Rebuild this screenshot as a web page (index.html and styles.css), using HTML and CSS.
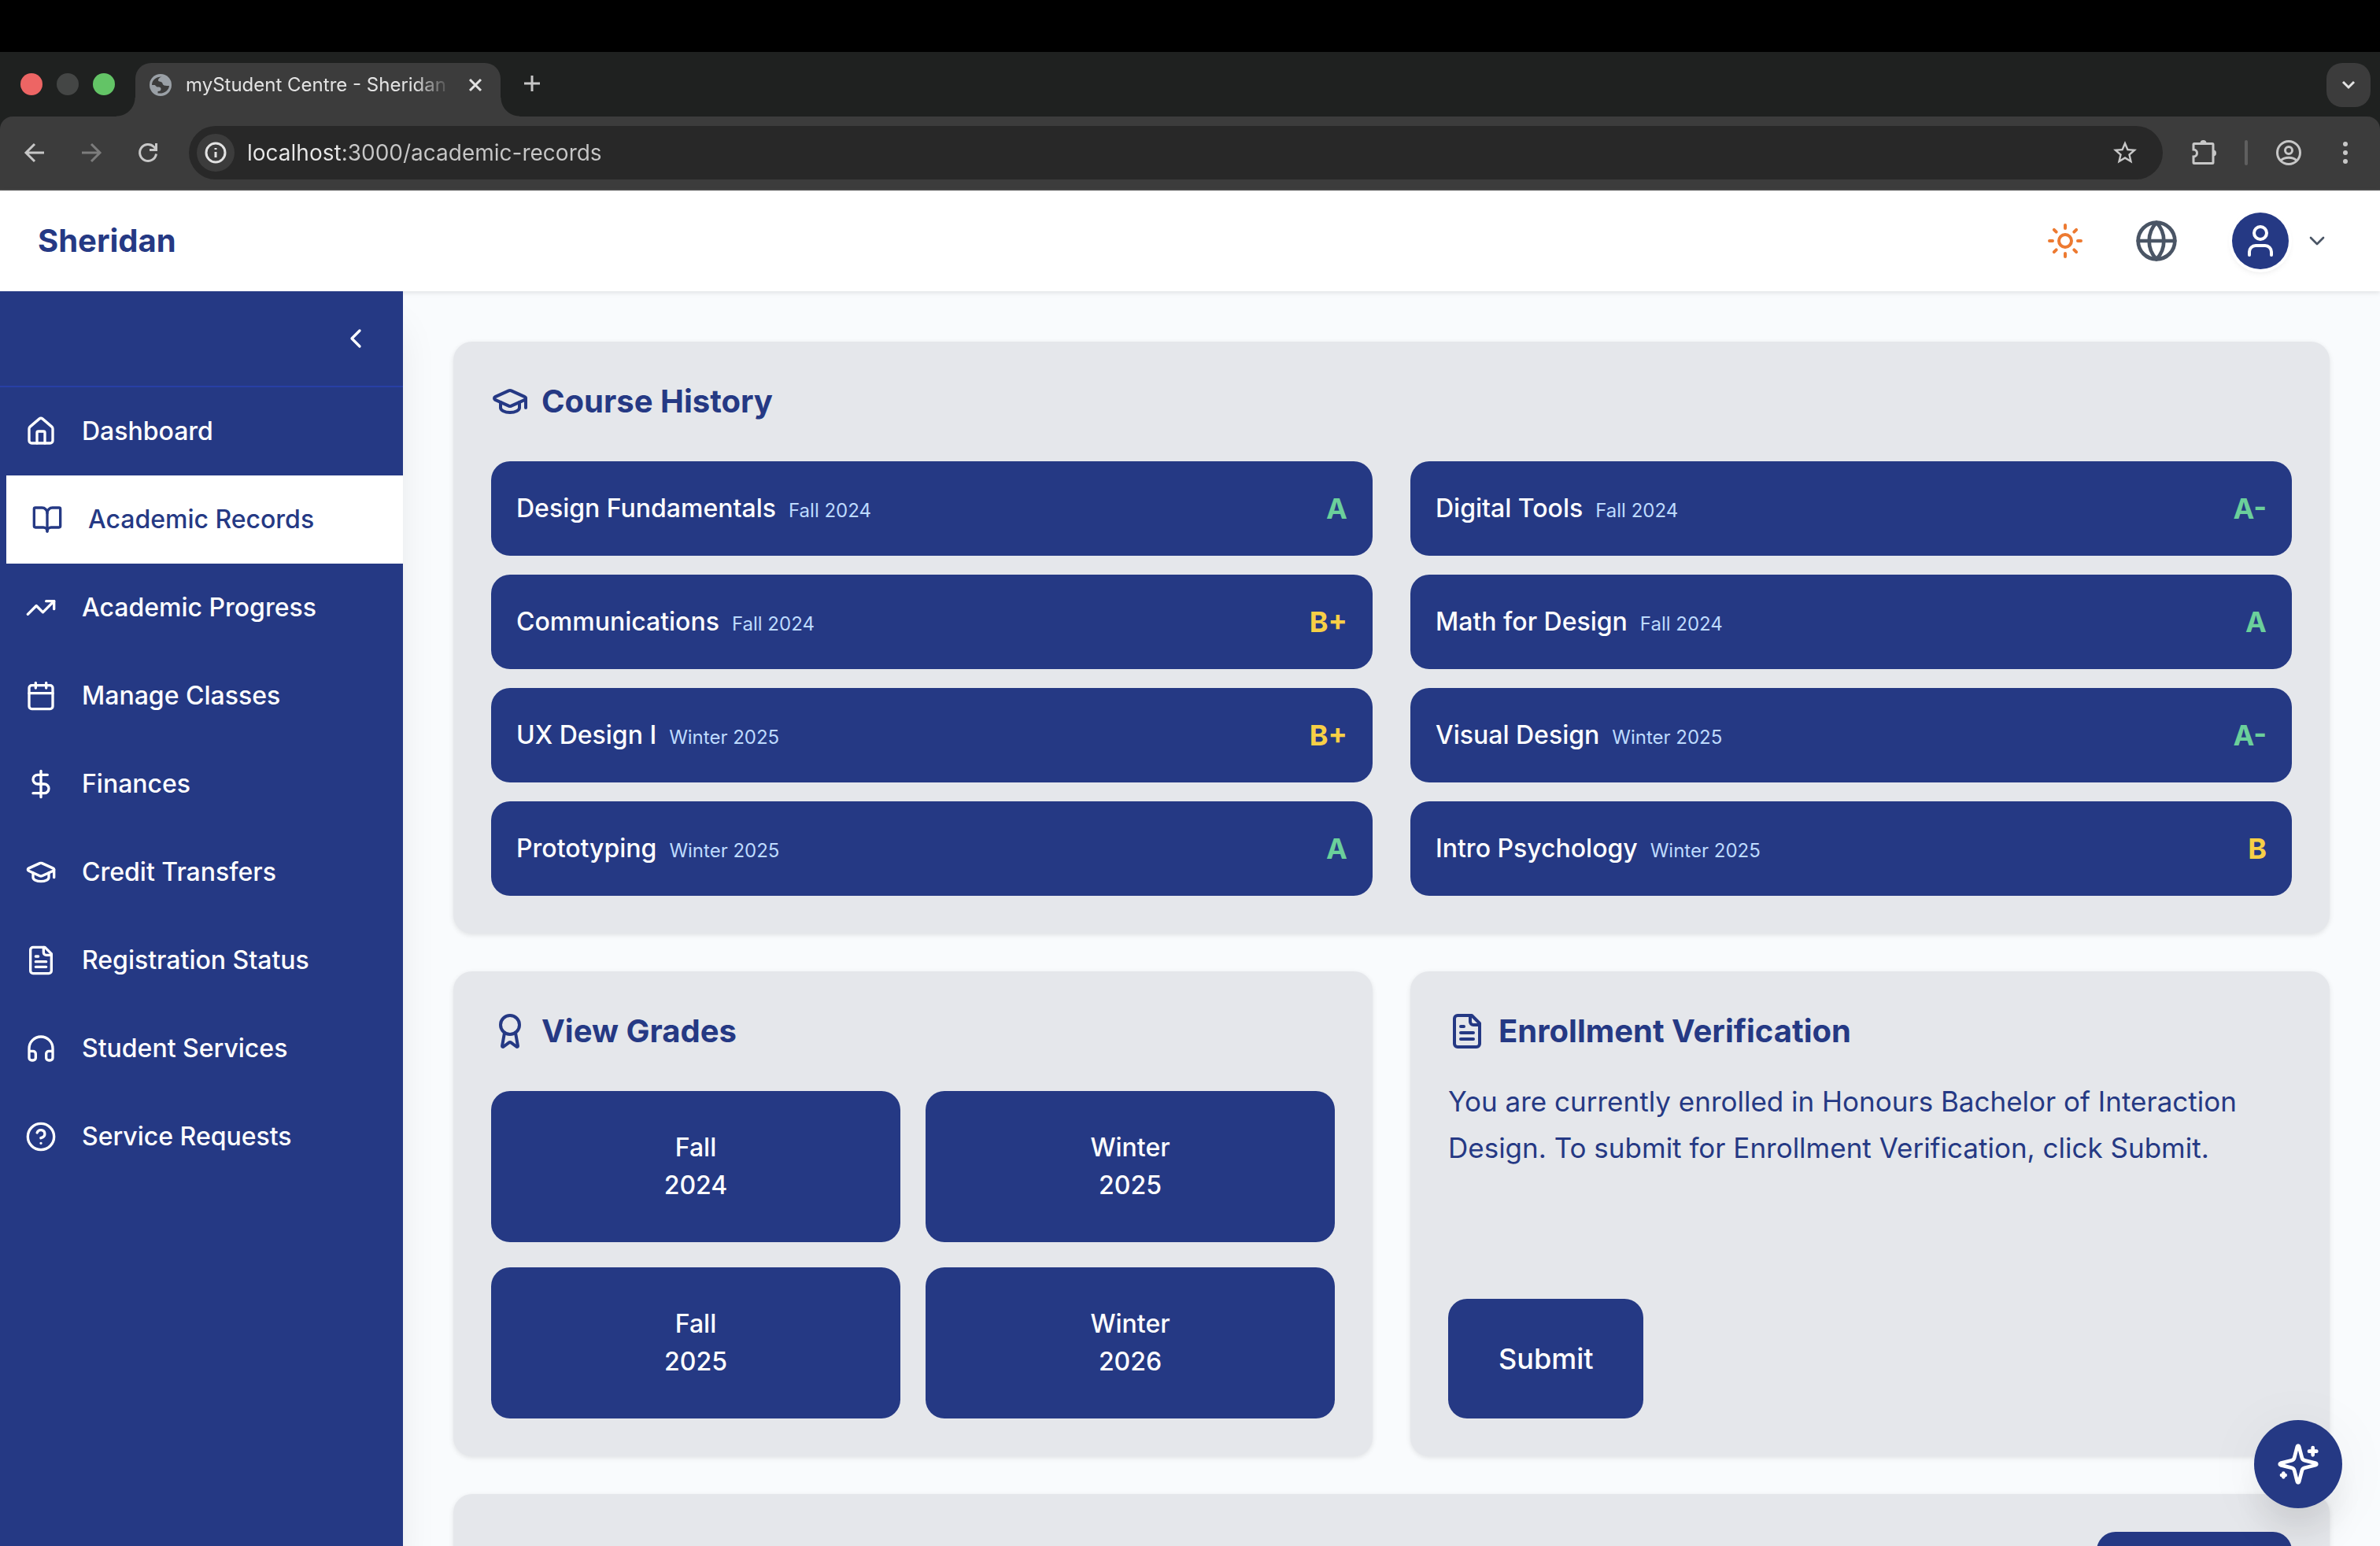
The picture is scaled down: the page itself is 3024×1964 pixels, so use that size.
FILE: index.html
```html
<!DOCTYPE html>
<html lang="en">
<head>
    <meta charset="UTF-8">
    <meta name="viewport" content="width=device-width, initial-scale=1.0">
    <title>myStudent Centre - Sheridan</title>
    <link rel="stylesheet" href="styles.css">
</head>
<body>
    <!-- Browser window -->
    <div class="browser">
        <div class="tab-strip">
            <div class="lights">
                <span class="light red"></span>
                <span class="light grey"></span>
                <span class="light green"></span>
            </div>
            <div class="tab">
                <svg class="favicon" viewBox="0 0 28 28"><circle cx="14" cy="14" r="14" fill="#9aa0a6"/><path d="M3 14C3 8 8 3.500 15.500 3.500c-3 1-4.500 2.500-4.500 4.500 0 2.500 5 1 5.500 4 .5 3 4 3 8.500 3-.5 5-5 10.500-14.500 9.500V22c3 0 4-1 4-3s-1.500-2.500-4-2.500S8 14 6 14z" fill="#3c3c3c"/></svg>
                <span class="tab-title">myStudent Centre - Sheridan</span>
                <button class="chrome-btn tab-close" aria-label="Close tab"><svg viewBox="0 0 20 20"><path d="M3 3l14 14M17 3L3 17"/></svg></button>
            </div>
            <button class="chrome-btn new-tab" aria-label="New tab"><svg viewBox="0 0 24 24"><path d="M12 2v20M2 12h20"/></svg></button>
            <button class="chrome-btn tab-search" aria-label="Search tabs"><svg viewBox="0 0 24 24"><path d="M5 8l7 7 7-7"/></svg></button>
        </div>
        <div class="toolbar">
            <button class="chrome-btn tool" aria-label="Back"><svg viewBox="0 0 32 32"><path d="M28 16H6M16 5L5 16l11 11"/></svg></button>
            <button class="chrome-btn tool disabled" aria-label="Forward" disabled><svg viewBox="0 0 32 32"><path d="M4 16h22M16 5l11 11-11 11"/></svg></button>
            <button class="chrome-btn tool" aria-label="Reload"><svg viewBox="0 0 32 32"><path d="M26.500 17.500a10.500 10.500 0 1 1-3-9l3 3M26.500 4v8.500H18"/></svg></button>
            <div class="omnibox">
                <span class="site-info"><svg viewBox="0 0 28 28"><circle cx="14" cy="14" r="12"/><path d="M14 13v7M14 8v2"/></svg></span>
                <input class="address" type="text" aria-label="Address" value="localhost:3000/academic-records">
                <button class="chrome-btn star" aria-label="Bookmark"><svg viewBox="0 0 24 24"><path fill="currentColor" stroke="none" d="M22 9.240l-7.190-.62L12 2 9.190 8.630 2 9.240l5.460 4.730L5.820 21 12 17.270 18.180 21l-1.630-7.030L22 9.240zM12 15.400l-3.760 2.270 1-4.280-3.320-2.880 4.380-.38L12 6.100l1.710 4.040 4.380.38-3.320 2.880 1 4.280L12 15.400z"/></svg></button>
            </div>
            <div class="toolbar-end">
                <button class="chrome-btn tool" aria-label="Extensions"><svg viewBox="0 0 32 32"><path d="M4 4.500h23a1 1 0 0 1 1 1v23a1 1 0 0 1-1 1H4a1 1 0 0 1-1-1V21c6 0 6-9 0-9V5.500a1 1 0 0 1 1-1z"/><path fill="currentColor" stroke="none" d="M11.500 4a4 4 0 0 1 8 0zM28 12.500a4 4 0 0 1 0 8z"/></svg></button>
                <span class="separator"></span>
                <button class="chrome-btn tool profile" aria-label="Profile"><svg viewBox="0 0 32 32"><circle cx="16" cy="16" r="14.500"/><circle cx="16" cy="13" r="4.500"/><path d="M6 26c5-5 15-5 20 0"/></svg></button>
                <button class="chrome-btn tool" aria-label="Menu"><svg viewBox="0 0 32 32"><g fill="currentColor" stroke="none"><circle cx="16" cy="5" r="3"/><circle cx="16" cy="16" r="3"/><circle cx="16" cy="27" r="3"/></g></svg></button>
            </div>
        </div>
    </div>

    <!-- Top Header -->
    <header class="header">
        <a class="brand" href="/">Sheridan</a>
        <div class="header-actions">
            <button class="plain-btn sun" aria-label="Toggle theme"><svg class="icon icon-48" viewBox="0 0 24 24"><circle cx="12" cy="12" r="4"/><path d="M12 2v2M12 20v2M4.930 4.930l1.410 1.410M17.660 17.660l1.410 1.410M2 12h2M20 12h2M6.340 17.660l-1.410 1.410M19.070 4.930l-1.410 1.410"/></svg></button>
            <button class="plain-btn globe" aria-label="Language"><svg class="icon icon-56" viewBox="0 0 24 24"><circle cx="12" cy="12" r="10"/><path d="M12 2a14.500 14.500 0 0 0 0 20 14.500 14.500 0 0 0 0-20M2 12h20"/></svg></button>
            <button class="plain-btn account" aria-label="Account">
                <span class="avatar"><svg class="icon icon-48" viewBox="0 0 24 24"><path d="M19 21v-2a4 4 0 0 0-4-4H9a4 4 0 0 0-4 4v2"/><circle cx="12" cy="7" r="4"/></svg></span>
                <svg class="icon icon-32" viewBox="0 0 24 24"><path d="m6 9 6 6 6-6"/></svg>
            </button>
        </div>
    </header>

    <div class="layout">
        <!-- Sidebar -->
        <aside class="sidebar">
            <div class="sidebar-top">
                <button class="plain-btn" aria-label="Collapse sidebar"><svg class="icon icon-40" viewBox="0 0 24 24"><path d="m15 18-6-6 6-6"/></svg></button>
            </div>
            <nav class="nav">
                <a href="/dashboard"><svg class="icon icon-40" viewBox="0 0 24 24"><path d="M15 21v-8a1 1 0 0 0-1-1h-4a1 1 0 0 0-1 1v8"/><path d="M3 10a2 2 0 0 1 .709-1.528l7-5.999a2 2 0 0 1 2.582 0l7 5.999A2 2 0 0 1 21 10v9a2 2 0 0 1-2 2H5a2 2 0 0 1-2-2z"/></svg>Dashboard</a>
                <a href="/academic-records" class="active"><svg class="icon icon-40" viewBox="0 0 24 24"><path d="M12 7v14"/><path d="M3 18a1 1 0 0 1-1-1V4a1 1 0 0 1 1-1h5a4 4 0 0 1 4 4 4 4 0 0 1 4-4h5a1 1 0 0 1 1 1v13a1 1 0 0 1-1 1h-6a3 3 0 0 0-3 3 3 3 0 0 0-3-3z"/></svg>Academic Records</a>
                <a href="/academic-progress"><svg class="icon icon-40" viewBox="0 0 24 24"><path d="M16 7h6v6"/><path d="m22 7-8.500 8.500-5-5L2 17"/></svg>Academic Progress</a>
                <a href="/manage-classes"><svg class="icon icon-40" viewBox="0 0 24 24"><path d="M8 2v4M16 2v4M3 10h18"/><rect width="18" height="18" x="3" y="4" rx="2"/></svg>Manage Classes</a>
                <a href="/finances"><svg class="icon icon-40" viewBox="0 0 24 24"><path d="M12 2v20"/><path d="M17 5H9.500a3.500 3.500 0 0 0 0 7h5a3.500 3.500 0 0 1 0 7H6"/></svg>Finances</a>
                <a href="/credit-transfers"><svg class="icon icon-40" viewBox="0 0 24 24"><path d="M21.420 10.922a1 1 0 0 0-.019-1.838L12.830 5.180a2 2 0 0 0-1.660 0L2.600 9.080a1 1 0 0 0 0 1.832l8.570 3.908a2 2 0 0 0 1.660 0z"/><path d="M22 10v6"/><path d="M6 12.500V16a6 3 0 0 0 12 0v-3.500"/></svg>Credit Transfers</a>
                <a href="/registration-status"><svg class="icon icon-40" viewBox="0 0 24 24"><path d="M15 2H6a2 2 0 0 0-2 2v16a2 2 0 0 0 2 2h12a2 2 0 0 0 2-2V7Z"/><path d="M14 2v4a2 2 0 0 0 2 2h4M10 9H8M16 13H8M16 17H8"/></svg>Registration Status</a>
                <a href="/student-services"><svg class="icon icon-40" viewBox="0 0 24 24"><path d="M3 14h3a2 2 0 0 1 2 2v3a2 2 0 0 1-2 2H5a2 2 0 0 1-2-2v-7a9 9 0 0 1 18 0v7a2 2 0 0 1-2 2h-1a2 2 0 0 1-2-2v-3a2 2 0 0 1 2-2h3"/></svg>Student Services</a>
                <a href="/service-requests"><svg class="icon icon-40" viewBox="0 0 24 24"><circle cx="12" cy="12" r="10"/><path d="M9.090 9a3 3 0 0 1 5.830 1c0 2-3 3-3 3M12 17h.01"/></svg>Service Requests</a>
            </nav>
        </aside>

        <!-- Page Content -->
        <main class="content">
            <section class="card wide">
                <h2><svg class="icon icon-48" viewBox="0 0 24 24"><path d="M21.420 10.922a1 1 0 0 0-.019-1.838L12.830 5.180a2 2 0 0 0-1.660 0L2.600 9.080a1 1 0 0 0 0 1.832l8.570 3.908a2 2 0 0 0 1.660 0z"/><path d="M22 10v6"/><path d="M6 12.500V16a6 3 0 0 0 12 0v-3.500"/></svg>Course History</h2>
                <ul class="courses">
                    <li><span class="course">Design Fundamentals<span class="term">Fall 2024</span></span><span class="grade a">A</span></li>
                    <li><span class="course">Digital Tools<span class="term">Fall 2024</span></span><span class="grade a">A-</span></li>
                    <li><span class="course">Communications<span class="term">Fall 2024</span></span><span class="grade b">B+</span></li>
                    <li><span class="course">Math for Design<span class="term">Fall 2024</span></span><span class="grade a">A</span></li>
                    <li><span class="course">UX Design I<span class="term">Winter 2025</span></span><span class="grade b">B+</span></li>
                    <li><span class="course">Visual Design<span class="term">Winter 2025</span></span><span class="grade a">A-</span></li>
                    <li><span class="course">Prototyping<span class="term">Winter 2025</span></span><span class="grade a">A</span></li>
                    <li><span class="course">Intro Psychology<span class="term">Winter 2025</span></span><span class="grade b">B</span></li>
                </ul>
            </section>

            <section class="card">
                <h2><svg class="icon icon-48" viewBox="0 0 24 24"><path d="m15.477 12.890 1.515 8.526a.5.5 0 0 1-.81.47l-3.580-2.687a1 1 0 0 0-1.197 0l-3.586 2.686a.5.5 0 0 1-.81-.469l1.514-8.526"/><circle cx="12" cy="8" r="6"/></svg>View Grades</h2>
                <div class="terms">
                    <button>Fall<br>2024</button>
                    <button>Winter<br>2025</button>
                    <button>Fall<br>2025</button>
                    <button>Winter<br>2026</button>
                </div>
            </section>

            <section class="card enrollment">
                <h2><svg class="icon icon-48" viewBox="0 0 24 24"><path d="M15 2H6a2 2 0 0 0-2 2v16a2 2 0 0 0 2 2h12a2 2 0 0 0 2-2V7Z"/><path d="M14 2v4a2 2 0 0 0 2 2h4M10 9H8M16 13H8M16 17H8"/></svg>Enrollment Verification</h2>
                <p>You are currently enrolled in Honours Bachelor of Interaction Design. To submit for Enrollment Verification, click Submit.</p>
                <button class="submit">Submit</button>
            </section>

            <section class="card wide next">
                <button class="submit" aria-label="Submit"></button>
            </section>
        </main>
    </div>

    <!-- Assistant button -->
    <button class="assistant" aria-label="Open assistant"><svg class="icon icon-56" viewBox="0 0 24 24"><path d="M9.937 15.500A2 2 0 0 0 8.500 14.063l-6.135-1.582a.5.5 0 0 1 0-.962L8.500 9.936A2 2 0 0 0 9.937 8.500l1.582-6.135a.5.5 0 0 1 .963 0L14.063 8.500A2 2 0 0 0 15.500 9.937l6.135 1.581a.5.5 0 0 1 0 .964L15.500 14.063a2 2 0 0 0-1.437 1.437l-1.582 6.135a.5.5 0 0 1-.963 0z"/><path d="M20 3v4M22 5h-4M4 17v2M5 18H3"/></svg></button>
</body>
</html>
```
FILE: styles.css
```css
* {
    box-sizing: border-box;
}

body {
    margin: 0;
    height: 100vh;
    display: flex;
    flex-direction: column;
    overflow: hidden;
    font-family: Inter, 'Liberation Sans', sans-serif;
    font-size: 32px;
    line-height: 48px;
    background-color: #f9fbfd;
    color: #253984;
}

button {
    font: inherit;
    border: none;
    padding: 0;
    cursor: pointer;
}

/* Browser window */
.browser {
    flex: none;
    padding-top: 66px;
    background: linear-gradient(#000 66px, #1f2120 66px);
    color: #c7c7c7;
}

.tab-strip {
    height: 82px;
    padding: 14px 12px 0 26px;
    display: flex;
}

.lights {
    display: flex;
    gap: 18px;
    width: 146px;
    padding-top: 13px;
}

.light {
    width: 28px;
    height: 28px;
    border-radius: 50%;
}

.red {
    background-color: #ed6564;
}

.grey {
    background-color: #444645;
}

.green {
    background-color: #63c466;
}

.tab {
    position: relative;
    width: 464px;
    height: 68px;
    padding: 0 22px 12px 18px;
    display: flex;
    align-items: center;
    background-color: #3c3c3c;
    border-radius: 20px 20px 0 0;
}

/* Curved feet on both sides of the tab */
.tab::before,
.tab::after {
    content: "";
    position: absolute;
    bottom: 0;
    width: 24px;
    height: 24px;
}

.tab::before {
    right: 100%;
    background: radial-gradient(circle at 0 0, transparent 23px, #3c3c3c 24px);
}

.tab::after {
    left: 100%;
    background: radial-gradient(circle at 100% 0, transparent 23px, #3c3c3c 24px);
}

.favicon {
    width: 28px;
    height: 28px;
    margin-right: 18px;
}

.tab-title {
    width: 332px;
    font-size: 24px;
    line-height: 32px;
    white-space: nowrap;
    overflow: hidden;
    color: #e3e3e3;
    -webkit-mask-image: linear-gradient(to right, #000 290px, transparent 338px);
    mask-image: linear-gradient(to right, #000 290px, transparent 338px);
}

.chrome-btn {
    background: none;
    color: inherit;
    display: flex;
    align-items: center;
    justify-content: center;
}

.chrome-btn svg,
.site-info svg {
    fill: none;
    stroke: currentColor;
    stroke-width: 3;
}

.tab-close {
    margin-left: auto;
    color: #e3e3e3;
}

.tab-close svg {
    width: 20px;
    height: 20px;
}

.new-tab {
    width: 56px;
    height: 52px;
    margin-left: 12px;
}

.new-tab svg {
    width: 24px;
    height: 24px;
}

.tab-search {
    width: 56px;
    height: 56px;
    margin-left: auto;
    border-radius: 20px;
    background-color: #3c3c3c;
    color: #e3e3e3;
}

.tab-search svg {
    width: 24px;
    height: 24px;
}

.toolbar {
    height: 94px;
    padding: 0 28px;
    display: flex;
    align-items: center;
    gap: 40px;
    background-color: #3c3c3c;
    border-bottom: 2px solid #4a4a4a;
    border-radius: 16px 16px 0 0;
}

.tool svg {
    width: 32px;
    height: 32px;
}

.disabled {
    color: #7c7c7c;
}

.omnibox {
    flex: 1;
    height: 68px;
    margin: 0 -4px;
    padding: 0 30px 0 10px;
    display: flex;
    align-items: center;
    border-radius: 34px;
    background-color: #282828;
}

.site-info {
    width: 48px;
    height: 48px;
    display: flex;
    align-items: center;
    justify-content: center;
    border-radius: 50%;
    background-color: #3c3c3c;
    color: #e3e3e3;
}

.site-info svg {
    width: 28px;
    height: 28px;
}

.address {
    flex: 1;
    margin-left: 16px;
    padding: 0;
    border: none;
    outline: none;
    font: inherit;
    font-size: 28px;
    line-height: 40px;
    background: linear-gradient(to right, #e8e8e8 122px, #c7c7c7 122px);
    -webkit-background-clip: text;
    background-clip: text;
    color: transparent;
}

.star svg {
    width: 36px;
    height: 36px;
}

.toolbar-end {
    display: flex;
    align-items: center;
    gap: 36px;
}

.separator {
    width: 4px;
    height: 32px;
    border-radius: 2px;
    background-color: #5f5f5f;
}

.profile {
    margin-right: 4px;
}

/* Icons */
.icon {
    flex: none;
    display: block;
    fill: none;
    stroke: currentColor;
    stroke-width: 2;
    stroke-linecap: round;
    stroke-linejoin: round;
}

.icon-32 {
    width: 32px;
    height: 32px;
}

.icon-40 {
    width: 40px;
    height: 40px;
}

.icon-48 {
    width: 48px;
    height: 48px;
}

.icon-56 {
    width: 56px;
    height: 56px;
}

.plain-btn {
    background: none;
    color: inherit;
}

/* Header */
.header {
    position: relative;
    z-index: 1;
    flex: none;
    height: 128px;
    padding: 0 64px 0 48px;
    display: flex;
    align-items: center;
    justify-content: space-between;
    background-color: #fff;
    box-shadow: 0 2px 6px rgba(0, 0, 0, 0.1);
}

.brand {
    font-size: 40px;
    line-height: 56px;
    font-weight: 700;
    color: #253984;
    text-decoration: none;
}

.header-actions {
    display: flex;
    align-items: center;
    gap: 64px;
}

.sun {
    color: #ed7a31;
}

.globe,
.account {
    color: #4a5565;
}

.account {
    display: flex;
    align-items: center;
    gap: 20px;
    padding-left: 4px;
}

.avatar {
    width: 72px;
    height: 72px;
    display: flex;
    align-items: center;
    justify-content: center;
    border-radius: 50%;
    background-color: #253984;
    color: #fff;
    box-shadow: 0 0 0 4px #fff, 0 4px 8px rgba(0, 0, 0, 0.1);
}

/* Sidebar */
.layout {
    flex: 1;
    min-height: 0;
    display: flex;
}

.sidebar {
    position: relative;
    z-index: 2;
    flex: none;
    width: 512px;
    background-color: #253984;
    color: #fff;
    box-shadow: 0 40px 50px -10px rgba(0, 0, 0, 0.1);
}

.sidebar-top {
    height: 122px;
    padding-right: 40px;
    display: flex;
    align-items: center;
    justify-content: flex-end;
    border-bottom: 2px solid #283fa6;
}

.nav a {
    height: 112px;
    padding: 0 32px;
    display: flex;
    align-items: center;
    gap: 32px;
    font-weight: 500;
    color: #fff;
    text-decoration: none;
}

.nav .active {
    background-color: #fff;
    color: #253984;
    border-left: 8px solid #253984;
}

/* Content */
.content {
    flex: 1;
    min-width: 0;
    padding: 64px;
    display: grid;
    grid-template-columns: 1fr 1fr;
    align-content: start;
    gap: 48px;
    overflow: hidden;
}

.card {
    padding: 48px;
    border-radius: 24px;
    background-color: #e5e7eb;
    box-shadow: 0 2px 6px rgba(0, 0, 0, 0.1);
}

.wide {
    grid-column: 1 / -1;
}

.card h2 {
    margin: 0 0 48px;
    display: flex;
    align-items: center;
    gap: 16px;
    font-size: 40px;
    line-height: 56px;
    font-weight: 700;
}

.courses {
    margin: 0;
    padding: 0;
    list-style: none;
    display: grid;
    grid-template-columns: 1fr 1fr;
    gap: 24px 48px;
}

.courses li {
    height: 120px;
    padding: 0 32px;
    display: flex;
    align-items: center;
    justify-content: space-between;
    border-radius: 24px;
    background-color: #253984;
    color: #fff;
}

.course {
    padding-top: 2px;
    font-weight: 500;
}

.term {
    margin-left: 16px;
    font-size: 24px;
    font-weight: 400;
    color: #bedbff;
}

.grade {
    font-size: 36px;
    font-weight: 700;
}

.a {
    color: #6bcf9b;
}

.b {
    color: #f7cf46;
}

.terms {
    display: grid;
    grid-template-columns: 1fr 1fr;
    gap: 32px;
}

.terms button,
.submit {
    border-radius: 24px;
    background-color: #253984;
    color: #fff;
    font-weight: 500;
}

.terms button {
    padding: 48px;
}

.enrollment {
    display: flex;
    flex-direction: column;
    align-items: flex-start;
}

.enrollment h2 {
    margin-bottom: 32px;
}

.enrollment p {
    margin: 0;
    font-size: 35px;
    line-height: 59px;
}

.submit {
    min-width: 248px;
    min-height: 152px;
    padding: 48px 64px;
    font-size: 36px;
    line-height: 56px;
}

.enrollment .submit {
    margin-top: auto;
}

.next {
    display: flex;
    justify-content: flex-end;
}

.assistant {
    position: fixed;
    z-index: 3;
    right: 48px;
    bottom: 48px;
    width: 112px;
    height: 112px;
    display: flex;
    align-items: center;
    justify-content: center;
    border-radius: 50%;
    background-color: #253984;
    color: #fff;
    box-shadow: 0 40px 50px -10px rgba(0, 0, 0, 0.1), 0 8px 80px rgba(0, 0, 0, 0.05);
}
```
